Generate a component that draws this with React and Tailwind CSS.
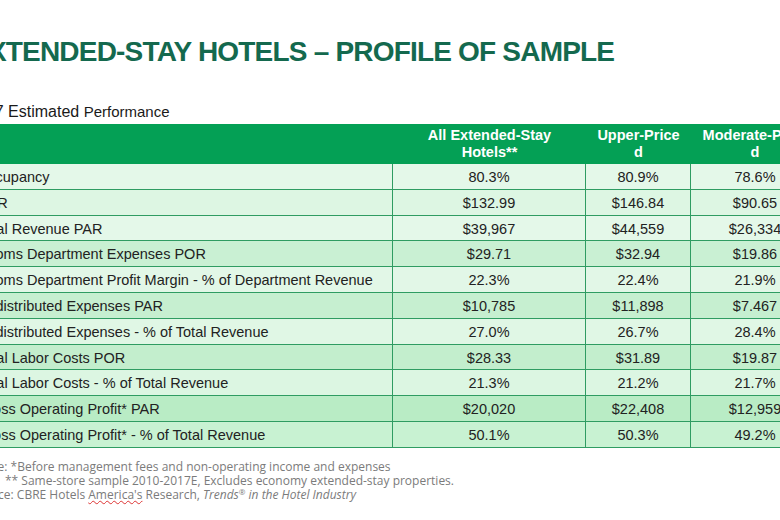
import React from 'react';

const rows = [
  { label: 'Occupancy', a: '80.3%', b: '80.9%', c: '78.6%', tone: 'bg-[#e4f8e9]' },
  { label: 'ADR', a: '$132.99', b: '$146.84', c: '$90.65', tone: 'bg-[#ddf6e3]' },
  { label: 'Total Revenue PAR', a: '$39,967', b: '$44,559', c: '$26,334', tone: 'bg-[#e4f8e9]' },
  { label: 'Rooms Department Expenses POR', a: '$29.71', b: '$32.94', c: '$19.86', tone: 'bg-[#c9f0d3]' },
  { label: 'Rooms Department Profit Margin - % of Department Revenue', a: '22.3%', b: '22.4%', c: '21.9%', tone: 'bg-[#e2f7e7]' },
  { label: 'Undistributed Expenses PAR', a: '$10,785', b: '$11,898', c: '$7.467', tone: 'bg-[#c6efd0]' },
  { label: 'Undistributed Expenses - % of Total Revenue', a: '27.0%', b: '26.7%', c: '28.4%', tone: 'bg-[#e0f7e5]' },
  { label: 'Total Labor Costs POR', a: '$28.33', b: '$31.89', c: '$19.87', tone: 'bg-[#c3eecd]' },
  { label: 'Total Labor Costs - % of Total Revenue', a: '21.3%', b: '21.2%', c: '21.7%', tone: 'bg-[#dcf6e2]' },
  { label: 'Gross Operating Profit* PAR', a: '$20,020', b: '$22,408', c: '$12,959', tone: 'bg-[#b9ecc5]' },
  { label: 'Gross Operating Profit* - % of Total Revenue', a: '50.1%', b: '50.3%', c: '49.2%', tone: 'bg-[#c8f2d2]' },
];

const cell = 'h-[25.8px] pt-[3px] flex items-center border-b border-[#2f9c62]';

export default function App() {
  return (
    <div className="w-[780px] h-[520px] overflow-hidden bg-white font-['Liberation_Sans',Arial,sans-serif]">
      <h1 className="ml-[-30px] pt-[38px] text-[28px] leading-none font-bold tracking-[-0.8px] text-[#14694e] whitespace-nowrap">
        EXTENDED-STAY HOTELS – PROFILE OF SAMPLE
      </h1>

      <p className="ml-[-32px] mt-[38px] h-[16px] leading-[16px] text-[#1a1a1a] whitespace-nowrap">
        <span className="text-[16px]">2017 Estimated </span>
        <span className="text-[15px]">Performance</span>
      </p>

      <div className="ml-[-29px] mt-[4px] w-[848px] grid grid-cols-[422px_193px_105px_128px] text-[14.5px] text-[#222]">
        <div className="h-[40px] bg-[#04a055]" />
        <div className="h-[40px] bg-[#04a055] flex items-center justify-center text-center font-bold text-white leading-[17px]">
          All Extended-Stay<br />Hotels**
        </div>
        <div className="h-[40px] bg-[#04a055] flex items-center justify-center text-center font-bold text-white leading-[17px]">
          Upper-Price<br />d
        </div>
        <div className="h-[40px] bg-[#04a055] flex items-center justify-center text-center font-bold text-white leading-[17px]">
          Moderate-Price<br />d
        </div>

        {rows.map((r) => (
          <React.Fragment key={r.label}>
            <div className={`${cell} ${r.tone} pl-[6px] border-r whitespace-nowrap`}>{r.label}</div>
            <div className={`${cell} ${r.tone} justify-center border-r`}>{r.a}</div>
            <div className={`${cell} ${r.tone} justify-center border-r`}>{r.b}</div>
            <div className={`${cell} ${r.tone} justify-center`}>{r.c}</div>
          </React.Fragment>
        ))}
      </div>

      <div className="ml-[-23px] mt-[12px] text-[12px] leading-[14px] text-[#7b7b7b] font-['Open_Sans',sans-serif] whitespace-nowrap">
        <p className="h-[14px]">Note: *Before management fees and non-operating income and expenses</p>
        <p className="h-[14px] pl-[28px]">** Same-store sample 2010-2017E, Excludes economy extended-stay properties.</p>
        <p className="h-[14px] ml-[-5px]">
          Source: CBRE Hotels <span className="underline decoration-wavy decoration-[#d33] decoration-1">America's</span> Research,{' '}
          <i>Trends<span className="text-[8px] leading-none align-top">®</span> in the Hotel Industry</i>
        </p>
      </div>
    </div>
  );
}
